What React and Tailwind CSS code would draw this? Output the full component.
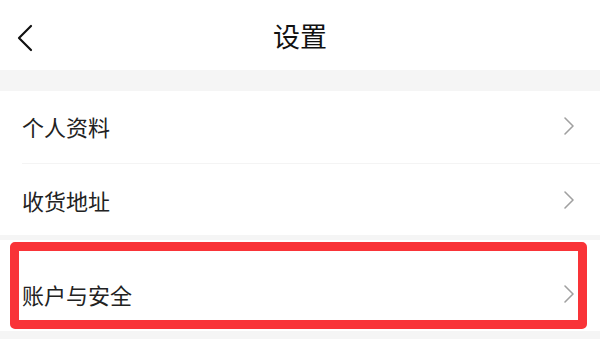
import React from 'react';

const font = { fontFamily: '"Noto Sans CJK SC", "Noto Sans", sans-serif' };

function Chevron() {
  return (
    <svg width="12" height="20" viewBox="0 0 12 20" fill="none" className="shrink-0">
      <path d="M2 2 L10 10 L2 18" stroke="#a0a0a0" strokeWidth="1.6" strokeLinecap="round" strokeLinejoin="round" />
    </svg>
  );
}

function Row({ label, children, className = '' }) {
  return (
    <div className={`relative flex items-center justify-between bg-white pl-[22px] pr-[25px] ${className}`}>
      <span className="text-[22px] leading-none text-[#222]">{label}</span>
      <Chevron />
      {children}
    </div>
  );
}

export default function App() {
  return (
    <div className="w-[600px] h-[339px] overflow-hidden bg-[#f5f5f5]" style={font}>
      {/* header */}
      <div className="relative flex h-[70px] items-center justify-center bg-white">
        <svg width="18" height="28" viewBox="0 0 18 28" fill="none" className="absolute left-[16px] top-[24px]">
          <path d="M15 2 L3 14 L15 26" stroke="#111" strokeWidth="2.2" strokeLinecap="round" strokeLinejoin="round" />
        </svg>
        <span className="text-[27px] leading-none text-[#111]">设置</span>
      </div>

      <div className="h-[21px]" />

      <div className="bg-white">
        <Row label="个人资料" className="h-[72px] pb-[2px]" />
        <div className="ml-[22px] h-px bg-[#f4f4f4]" />
        <Row label="收货地址" className="h-[71px]" />
      </div>

      <div className="h-[5px]" />

      <Row label="账户与安全" className="h-[91px] pt-[16px]">
        <div className="absolute left-[10px] top-[2px] h-[87px] w-[577px] rounded-[5px] border-[9px] border-[#f93438]" />
      </Row>
    </div>
  );
}
